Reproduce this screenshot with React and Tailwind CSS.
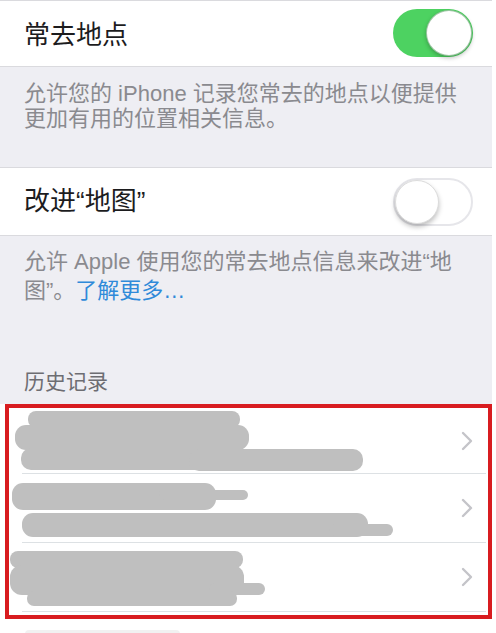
import React from "react";

const FONT = { fontFamily: '"Liberation Sans", "Noto Sans CJK SC", sans-serif' };

const Toggle = ({ on }) =>
  on ? (
    <div className="relative w-[80px] h-[48px] rounded-full bg-[#4dd261]">
      <div className="absolute right-[1px] top-[1px] w-[46px] h-[46px] rounded-full bg-white border border-[#5e9f68]/60 shadow-[0_2px_4px_rgba(0,0,0,0.25)]" />
    </div>
  ) : (
    <div className="relative w-[80px] h-[48px] rounded-full bg-white border-2 border-[#e6e6ea]">
      <div className="absolute left-0 top-0 w-[44px] h-[44px] rounded-full bg-white border border-[#dcdcdc] shadow-[0_3px_5px_rgba(0,0,0,0.25)]" />
    </div>
  );

const Chevron = () => (
  <svg width="12" height="20" viewBox="0 0 12 20" fill="none">
    <path d="M2 2 L10 10 L2 18" stroke="#c4c4c9" strokeWidth="2.4" strokeLinecap="round" strokeLinejoin="round" />
  </svg>
);

// scribbled-out entries in the history list
const blobs = [
  [
    [19, 3, 212, 17, 8],
    [6, 17, 234, 25, 11],
    [12, 40, 200, 22, 10],
    [180, 41, 174, 22, 10],
  ],
  [
    [3, 9, 204, 27, 11],
    [150, 16, 89, 10, 5],
    [13, 39, 346, 24, 11],
    [320, 50, 64, 12, 6],
  ],
  [
    [1, 8, 233, 17, 8],
    [1, 22, 234, 30, 12],
    [200, 40, 56, 12, 6],
    [18, 48, 210, 15, 7],
  ],
];

const HistoryRow = ({ shapes, height, last }) => (
  <div className={`flex flex-col ${last ? "" : ""}`}>
    <div className="flex items-center pr-[15px]" style={{ height }}>
      <svg width="390" height={height} viewBox={`0 0 390 ${height}`} className="shrink-0">
        {shapes.map(([x, y, w, h, r], i) => (
          <rect key={i} x={x} y={y} width={w} height={h} rx={r} fill="#bfbfbf" />
        ))}
      </svg>
      <div className="ml-auto">
        <Chevron />
      </div>
    </div>
    <div className="h-px bg-[#dde1e4] ml-[13px] mr-[2px]" />
  </div>
);

export default function App() {
  return (
    <div className="w-[496px] h-[633px] overflow-hidden bg-white" style={FONT}>
      <div className="w-[492px] bg-[#eeeef3]">
        {/* 常去地点 */}
        <div className="h-[67px] bg-white border-t border-b border-[#dadade] flex items-center justify-between pl-6 pr-[19px]">
          <span className="text-[26px] text-[#1c1c1e] mt-[4px]">常去地点</span>
          <div className="-mt-[2px]">
            <Toggle on />
          </div>
        </div>
        <div className="h-[100px] pt-[14px] pl-6 text-[22px] leading-[25px] text-[#8a8a8f]">
          允许您的 iPhone 记录您常去的地点以便提供
          <br />
          更加有用的位置相关信息。
        </div>

        {/* 改进“地图” */}
        <div className="h-[69px] bg-white border-t border-b border-[#dadade] flex items-center justify-between pl-6 pr-[19px]">
          <span className="text-[26px] text-[#1c1c1e]">改进“地图”</span>
          <Toggle />
        </div>
        <div className="pt-[11px] pl-6 text-[22px] leading-[29px] text-[#8a8a8f]">
          允许 Apple 使用您的常去地点信息来改进“地
          <br />
          图”。<span className="text-[#2f8ad9]">了解更多…</span>
        </div>

        <div className="pt-[63px] pb-[8px] pl-6 text-[21px] leading-[28px] text-[#6d6d72]">
          历史记录
        </div>

        {/* 历史记录列表 */}
        <div className="bg-white pl-[5px]">
          <div className="border-4 border-[#d81c20] pb-[3px]">
            <HistoryRow shapes={blobs[0]} height={65} />
            <HistoryRow shapes={blobs[1]} height={68} />
            <HistoryRow shapes={blobs[2]} height={68} last />
          </div>
          <div className="h-[20px] flex items-end pl-[20px]">
            <div className="w-[155px] h-[9px] rounded-sm bg-[#f1f1f1]" />
          </div>
        </div>
      </div>
    </div>
  );
}
